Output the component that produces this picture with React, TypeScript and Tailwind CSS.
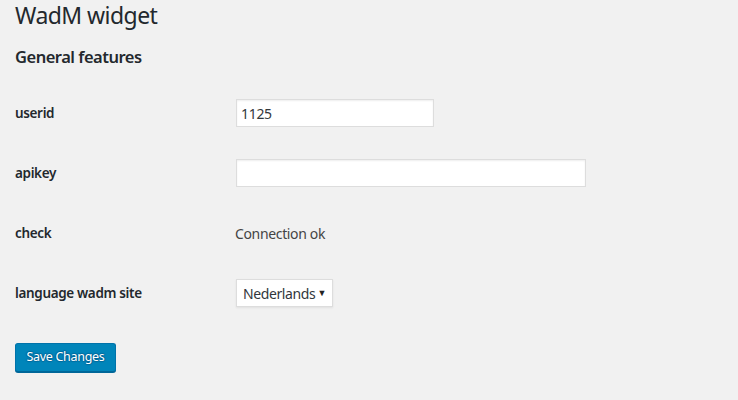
export default function App() {
  const rows = [
    { label: "userid", kind: "input", value: "1125", width: "w-[198px]" },
    { label: "apikey", kind: "input", value: "", width: "w-[350px]" },
    { label: "check", kind: "text", value: "Connection ok" },
    { label: "language wadm site", kind: "select", value: "Nederlands" },
  ];

  return (
    <div className="min-h-[400px] w-full bg-[#f1f1f1] text-[#444] font-['Noto_Sans','Open_Sans',sans-serif] text-[13px]">
      <div className="px-[15px]">
        <h1 className="h-[31px] text-[23px] font-normal leading-[30px] tracking-[-0.55px] text-[#23282d]">
          WadM widget
        </h1>
        <h2 className="mt-[10px] h-[32px] text-[16.5px] font-semibold leading-[32px] tracking-[-0.5px] text-[#23282d]">
          General features
        </h2>

        <div className="mt-[10px] flex flex-col">
          {rows.map((row) => (
            <div key={row.label} className="flex h-[60px] items-center">
              <div className="w-[221px] shrink-0 text-[13.5px] font-semibold tracking-[-0.35px] text-[#23282d]">
                {row.label}
              </div>
              {row.kind === "input" && (
                <input
                  defaultValue={row.value}
                  className={`${row.width} h-[28px] border border-[#ddd] bg-white px-[4px] text-[14px] tracking-[-0.3px] text-[#32373c] shadow-[inset_0_1px_2px_rgba(0,0,0,0.07)] outline-none`}
                />
              )}
              {row.kind === "text" && (
                <span className="-ml-[1px] text-[14px] tracking-[-0.35px] text-[#444]">{row.value}</span>
              )}
              {row.kind === "select" && (
                <div className="flex h-[28px] w-[97px] items-center justify-between border border-[#ddd] bg-white pl-[6px] pr-[6px] text-[14px] tracking-[-0.4px] text-[#32373c] shadow-[0_1px_2px_rgba(0,0,0,0.07)]">
                  <span>{row.value}</span>
                  <span className="text-[9px] text-[#222]">▼</span>
                </div>
              )}
            </div>
          ))}
        </div>

        <div className="mt-[20px]">
          <button className="h-[29px] w-[101px] rounded-[3px] border border-[#0073aa] border-b-[#006799] bg-[#0085ba] text-[12.5px] tracking-[-0.3px] text-white shadow-[0_1px_0_#006799] [text-shadow:0_-1px_1px_#006799,1px_0_1px_#006799,0_1px_1px_#006799,-1px_0_1px_#006799]">
            Save Changes
          </button>
        </div>
      </div>
    </div>
  );
}
